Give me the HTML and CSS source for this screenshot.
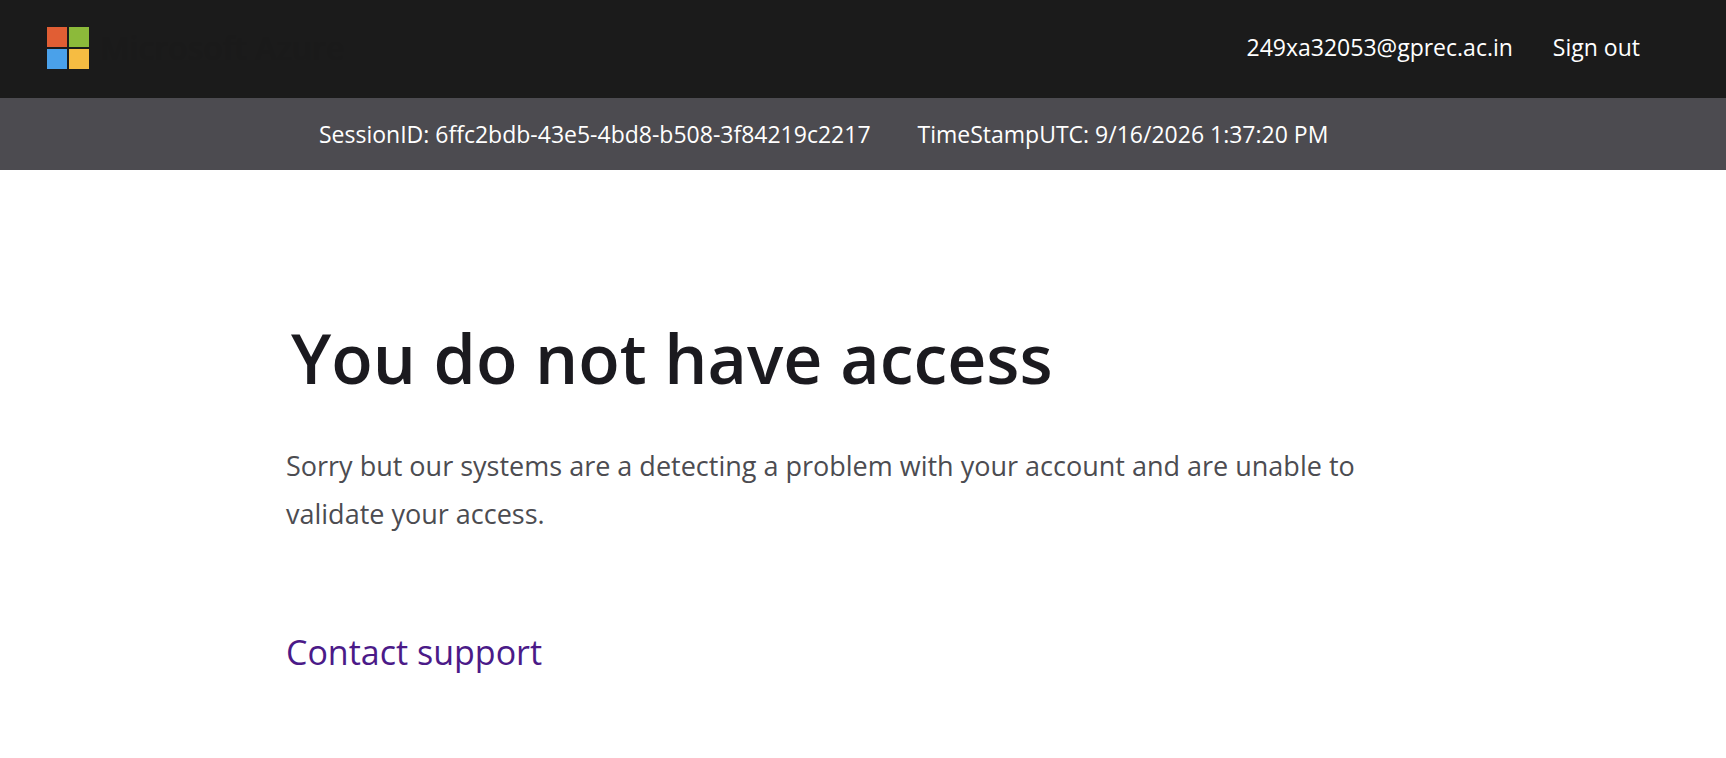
FILE: index.html
```html
<!DOCTYPE html>
<html lang="en">
<head>
  <meta charset="UTF-8">
  <meta name="viewport" content="width=device-width, initial-scale=1">
  <title>Microsoft Azure</title>
  <link rel="stylesheet" href="styles.css">
</head>
<body>
  <header class="header">
    <a class="brand" href="#">
      <svg class="brand-logo" viewBox="0 0 42 42" aria-hidden="true">
        <rect width="20" height="20" fill="#e15e34"/>
        <rect x="22" width="20" height="20" fill="#8cba3a"/>
        <rect y="22" width="20" height="20" fill="#4aa1ea"/>
        <rect x="22" y="22" width="20" height="20" fill="#f6bc42"/>
      </svg>
      <span class="brand-name">Microsoft Azure</span>
    </a>
    <nav class="account">
      <span>249xa32053@gprec.ac.in</span>
      <a href="#">Sign out</a>
    </nav>
  </header>

  <div class="session-bar">
    <div class="container session">
      <span>SessionID: 6ffc2bdb-43e5-4bd8-b508-3f84219c2217</span>
      <span>TimeStampUTC: 9/16/2026 1:37:20 PM</span>
    </div>
  </div>

  <main class="container content">
    <h1>You do not have access</h1>
    <p class="message">Sorry but our systems are a detecting a problem with your account and are unable to validate your access.</p>
    <a class="support-link" href="#">Contact support</a>
  </main>
</body>
</html>
```
FILE: styles.css
```css
* {
  box-sizing: border-box;
}
body {
  margin: 0;
  background: #fff;
  color: #4c4c51;
  font-family: "Segoe UI", "Open Sans", "Noto Sans", sans-serif;
  font-size: 23px;
  line-height: 32px;
}
a {
  color: inherit;
  text-decoration: none;
}
a:hover {
  text-decoration: underline;
}
.container {
  width: 100%;
  max-width: 1154px;
  margin: 0 auto;
}

/* Header */
.header {
  display: flex;
  align-items: center;
  justify-content: space-between;
  min-height: 98px;
  padding: 0 86px 2px 47px;
  background: #1b1b1b;
  color: #fff;
}
.brand {
  display: flex;
  align-items: center;
  gap: 11px;
}
.brand-logo {
  display: block;
  width: 42px;
  height: 42px;
}
.brand-name {
  color: #1a1a1a;
  font-size: 32px;
  font-weight: 600;
}
.account {
  display: flex;
  gap: 40px;
  padding-bottom: 2px;
}

/* Session info */
.session-bar {
  padding: 20px 0;
  background: #4c4b50;
  color: #fff;
}
.session {
  display: flex;
  flex-wrap: wrap;
  gap: 0 47px;
  padding-left: 33px;
}

/* Page content */
.content {
  padding-top: 140px;
}
h1 {
  margin: 0 0 36px 5px;
  color: #1b1a1f;
  font-size: 68px;
  font-weight: 600;
  line-height: 96px;
}
.message {
  max-width: 1080px;
  margin: 0 0 90px;
  font-size: 27px;
  line-height: 48px;
}
.support-link {
  color: #4b1a88;
  font-size: 34px;
  line-height: 48px;
}
```
